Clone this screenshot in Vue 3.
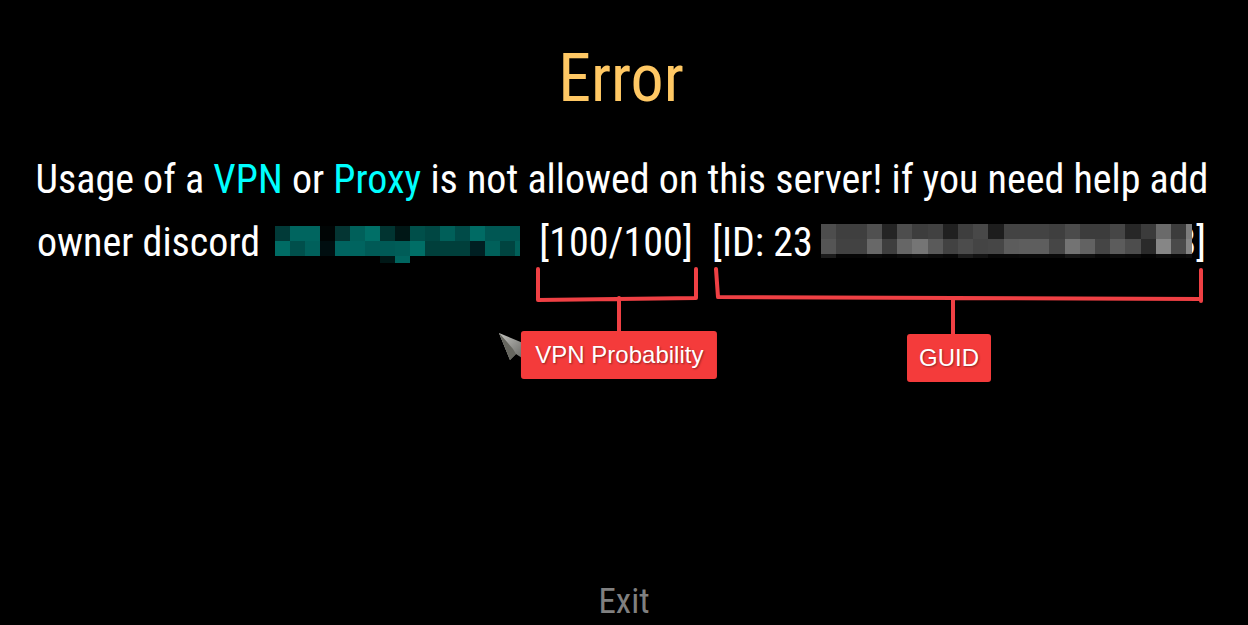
<script setup>
const CELL = 15

const teal = [
  ['013a38', '00655f', '00655f', '000505', '043533', '00605a', '006f67', '013431', '001716', '004f4a', '004743', '005f59', '004b48', '006b64', '005753', '005753', '005753'],
  ['006b64', '004f4b', '00605b', '000e10', '006460', '00645f', '005a56', '005a56', '005d58', '006e66', '003f3b', '003f3b', '003f3b', '001f22', '00605a', '004440', '006059'],
  ['', '', '', '', '', '', '', '001716', '00655f']
]

const greyRows = [
  '4d 3f 3f 50 24 4d 3d 41 20 3e 48 1d 43 43 43 3f 4b 3c 3c 46 27 3b 6a 3c 7c',
  '55 42 42 68 3e 66 75 5a 42 4c 44 46 5c 5e 5e 46 73 62 45 5c 4d 2a 86 4a 85',
  '1c 06 06 0a 06 0c 10 0c 08 1c 12 08 08 0a 0a 0a 16 10 08 0c 0a 04 0c 08 0c'
]
const grey = greyRows.map(r => r.split(' ').map(v => v + v + v))

const toCells = rows =>
  rows.flatMap((row, y) =>
    row.map((c, x) => ({ x: x * CELL, y: y * CELL, fill: '#' + c, on: !!c })).filter(c => c.on)
  )
const tealCells = toCells(teal)
const greyCells = toCells(grey)
</script>

<template>
  <main class="screen">
    <h1 class="title">Error</h1>

    <div class="message">
      <p class="line">
        Usage of a <span class="accent">VPN</span> or <span class="accent">Proxy</span> is not allowed on this server! if you need help add
      </p>
      <div class="details">
        <span class="owner">owner discord</span>
        <svg class="mosaic mosaic-name" viewBox="0 0 245 37" preserveAspectRatio="none" aria-hidden="true" shape-rendering="crispEdges">
          <rect v-for="(c, i) in tealCells" :key="i" :x="c.x" :y="c.y" width="15" height="15" :fill="c.fill" />
        </svg>

        <div class="part">
          <span class="value score">[100/100]</span>
          <svg class="bracket" viewBox="0 0 168 70" preserveAspectRatio="none" aria-hidden="true">
            <path d="M6 4V35L164 33V4M87 33V68" />
          </svg>
          <span class="tag tag-vpn">VPN Probability</span>
        </div>

        <div class="part">
          <span class="value id">
            <span>[ID: 23</span>
            <svg class="mosaic mosaic-id" viewBox="0 0 366 34" preserveAspectRatio="none" aria-hidden="true" shape-rendering="crispEdges">
              <rect v-for="(c, i) in greyCells" :key="i" :x="c.x" :y="c.y" width="15" height="15" :fill="c.fill" />
            </svg>
            <span>8]</span>
          </span>
          <svg class="bracket" viewBox="0 0 494 70" preserveAspectRatio="none" aria-hidden="true">
            <path d="M4 4L6 32L489 34M489 5V36M241 33V70" />
          </svg>
          <span class="tag tag-guid">GUID</span>
        </div>
      </div>
    </div>

    <svg class="cursor" viewBox="0 0 26 32" aria-hidden="true">
      <defs>
        <linearGradient id="metal" x1="0" y1="0" x2="1" y2="1">
          <stop offset="0" stop-color="#c4c4c0" />
          <stop offset="1" stop-color="#62625e" />
        </linearGradient>
      </defs>
      <path d="M0 1L24 11L26 28L17 22L11 28Z" fill="url(#metal)" />
      <path d="M0 1L11 28L14 17Z" fill="#8c8c86" />
      <path d="M0 1L14 17L17 22L11 28Z" fill="#66665f" />
    </svg>

    <button class="exit" type="button">Exit</button>
  </main>
</template>

<style>
body {
  background: #000;
}
</style>

<style scoped>
.screen {
  position: relative;
  box-sizing: border-box;
  display: flex;
  flex-direction: column;
  min-height: 100vh;
  padding-top: 39px;
  background: #000;
  color: #fff;
  font-family: "Roboto Condensed", "Liberation Sans Narrow", Roboto, sans-serif;
}

.title {
  margin: 0;
  padding-right: 6px;
  color: #ffc864;
  font-size: 66px;
  font-weight: 400;
  line-height: 80px;
  text-align: center;
}

.message {
  margin-top: 29px;
  font-size: 40px;
  line-height: 63px;
  white-space: nowrap;
}

.line {
  margin: 0;
  padding-right: 4px;
  text-align: center;
}

.accent {
  color: #0ff;
}

.details {
  display: grid;
  grid-template-columns: 226fr 245fr 168fr 494fr;
  column-gap: 12px;
  padding: 0 42px 0 37px;
}

.mosaic {
  display: block;
}

.mosaic-name {
  width: 100%;
  height: 37px;
  margin-top: 15px;
}

.part {
  position: relative;
}

.value {
  display: block;
}

.score {
  text-align: center;
}

.part .id {
  display: flex;
}

.mosaic-id {
  position: relative;
  z-index: 1;
  flex: 1;
  min-width: 0;
  height: 34px;
  margin: 13px -16px 0 8px;
}

.bracket {
  position: absolute;
  top: 54px;
  left: 0;
  width: 100%;
  height: 70px;
  fill: none;
  stroke: #ef4044;
  stroke-width: 4;
  stroke-linecap: round;
  stroke-linejoin: round;
}

.tag {
  position: absolute;
  z-index: 2;
  padding: 0 14px;
  border-radius: 3px;
  background: #f43b3b;
  font-family: "Liberation Sans", Arial, sans-serif;
  font-size: 24px;
  line-height: 48px;
  text-shadow: 1px 1px 2px #0006;
}

.tag-vpn {
  top: 120px;
  left: 52%;
  transform: translateX(-50%);
}

.tag-guid {
  top: 123px;
  left: 48%;
  padding: 0 12px;
  transform: translateX(-50%);
}

.cursor {
  position: absolute;
  top: 332px;
  left: 40%;
  width: 26px;
  height: 32px;
}

.exit {
  align-self: center;
  margin-top: auto;
  padding: 0;
  border: 0;
  background: none;
  color: #808080;
  font-family: inherit;
  font-size: 35px;
  line-height: 46px;
}
</style>
